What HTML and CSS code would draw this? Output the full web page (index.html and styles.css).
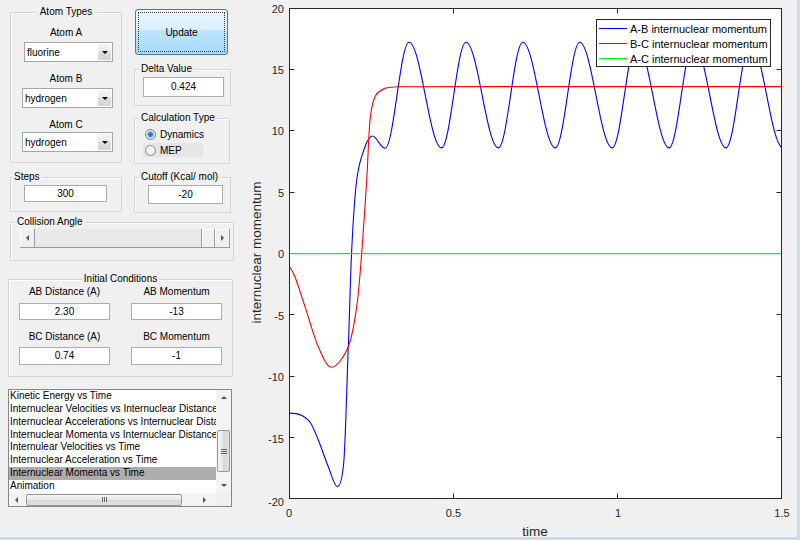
FILE: index.html
```html
<!DOCTYPE html>
<html lang="en">
<head>
<meta charset="utf-8">
<title>Reaction Dynamics</title>
<link rel="stylesheet" href="styles.css">
</head>
<body>
<div class="window">
  <div class="panel">
    <div class="row row-top">
      <div class="group atoms">
        <span class="gtitle center">Atom Types</span>
        <div class="lbl lbl-first">Atom A</div>
        <div class="select sel-a"><span>fluorine</span><span class="drop"></span></div>
        <div class="lbl lbl-next">Atom B</div>
        <div class="select sel-b"><span>hydrogen</span><span class="drop"></span></div>
        <div class="lbl lbl-next">Atom C</div>
        <div class="select sel-c"><span>hydrogen</span><span class="drop"></span></div>
      </div>
      <div class="col-right">
        <button class="update" type="button">Update</button>
        <div class="group delta">
          <span class="gtitle">Delta Value</span>
          <div class="edit delta-edit">0.424</div>
        </div>
        <div class="group calc">
          <span class="gtitle">Calculation Type</span>
          <div class="radio-row first"><span class="radio on"></span><span>Dynamics</span></div>
          <div class="radio-row mep"><span class="radio"></span><span>MEP</span></div>
        </div>
      </div>
    </div>
    <div class="row row-mid">
      <div class="group steps">
        <span class="gtitle tight">Steps</span>
        <div class="edit steps-edit">300</div>
      </div>
      <div class="group cutoff">
        <span class="gtitle">Cutoff (Kcal/ mol)</span>
        <div class="edit cutoff-edit">-20</div>
      </div>
    </div>
    <div class="group angle">
      <span class="gtitle">Collision Angle</span>
      <div class="hscroll">
        <span class="sb-btn"><span class="arr arr-left"></span></span>
        <span class="sb-track"></span>
        <span class="sb-btn sb-thumb"></span>
        <span class="sb-btn"><span class="arr arr-right"></span></span>
      </div>
    </div>
    <div class="group initial">
      <span class="gtitle center">Initial Conditions</span>
      <div class="lbl">AB Distance (A)</div>
      <div class="lbl">AB Momentum</div>
      <div class="edit ic-edit1">2.30</div>
      <div class="edit ic-edit1">-13</div>
      <div class="lbl ic-lbl2">BC Distance (A)</div>
      <div class="lbl ic-lbl2">BC Momentum</div>
      <div class="edit ic-edit2">0.74</div>
      <div class="edit ic-edit2">-1</div>
    </div>
    <div class="listbox">
      <ul class="items">
        <li>Kinetic Energy vs Time</li>
        <li>Internuclear Velocities vs Internuclear Distance</li>
        <li>Internuclear Accelerations vs Internuclear Distance</li>
        <li>Internuclear Momenta vs Internuclear Distance</li>
        <li>Internulear Velocities vs Time</li>
        <li>Internuclear Acceleration vs Time</li>
        <li class="sel">Internuclear Momenta vs Time</li>
        <li>Animation</li>
      </ul>
      <div class="vscroll">
        <span class="vs-btn"><span class="arr arr-up"></span></span>
        <span class="vs-gap1"></span>
        <span class="vs-thumb"><span class="grip-h"></span></span>
        <span class="vs-gap2"></span>
        <span class="vs-btn"><span class="arr arr-down"></span></span>
      </div>
      <div class="lhscroll">
        <span class="lh-btn"><span class="arr arr-left"></span></span>
        <span class="lh-thumb"><span class="grip-v"></span></span>
        <span class="lh-spacer"></span>
        <span class="lh-btn right"><span class="arr arr-right"></span></span>
      </div>
      <div class="corner"></div>
    </div>
  </div>
  <svg class="plot" width="557" height="537" viewBox="0 0 557 537">
    <defs>
      <clipPath id="plotclip"><rect x="49" y="8" width="493" height="491"/></clipPath>
    </defs>
    <rect class="plot-bg" x="49" y="8" width="493" height="491"/>
    <g clip-path="url(#plotclip)">
      <path class="c-blue" d="M49,413.1 C60,413.1 64,416 70,422 C73.05,426.25 75.25,432.55 78.3,440 C81.35,447.45 85.13,458.92 88.3,466.7 C91.47,474.48 94.5,486.7 97.3,486.7 C100.5,486.7 102.3,478 103.8,462 C105.3,446 107,380 108.3,346.7 C109.6,313.4 110.5,274 111.7,250 C112.9,226 114.2,199.5 116.7,180 C119.2,160.5 122.5,153.7 125,146.7 C127.5,139.7 129.8,136 132.3,136 C136.9,136 140.4,148.3 145,148.3 C153.7,148.3 160.3,42.3 169,42.3 C180.81,42.3 189.69,147.9 201.5,147.9 C210.37,147.9 217.03,42.3 225.9,42.3 C237.71,42.3 246.59,147.9 258.4,147.9 C267.27,147.9 273.93,42.3 282.8,42.3 C294.61,42.3 303.49,147.9 315.3,147.9 C324.17,147.9 330.83,42.3 339.7,42.3 C351.51,42.3 360.39,147.9 372.2,147.9 C381.07,147.9 387.73,42.3 396.6,42.3 C408.41,42.3 417.29,147.9 429.1,147.9 C437.97,147.9 444.63,42.3 453.5,42.3 C465.31,42.3 474.19,147.9 486,147.9 C494.87,147.9 501.53,42.3 510.4,42.3 C522.21,42.3 531.09,147.9 542.9,147.9"/>
      <path class="c-red" d="M49,265.8 C50,267.7 52.33,270.18 55,277 C57.67,283.82 61.12,295.08 65,306.7 C68.88,318.32 73.85,336.6 78.3,346.7 C82.75,356.8 86.7,367.3 91.7,367.3 C96.7,367.3 104.13,356.8 108.3,346.7 C112.47,336.6 114.47,322.27 116.7,306.7 C118.93,291.13 120.03,274.42 121.7,253.3 C123.37,232.18 125.32,202.22 126.7,180 C128.08,157.78 128.62,133.88 130,120 C131.38,106.12 132.5,101.98 135,96.7 C137.5,91.42 141.12,89.95 145,88.3 C148.9,87 154,86.7 158.3,86.7 L542,86.6"/>
    </g>
    <rect class="green-fill" x="50" y="253" width="491" height="1.2"/>
    <g class="axis">
      <rect x="49.5" y="8.5" width="492" height="490"/>
      <path d="M49.5,69.5h5M49.5,130.5h5M49.5,192.5h5M49.5,314.5h5M49.5,376.5h5M49.5,437.5h5 M541.5,69.5h-5M541.5,130.5h-5M541.5,192.5h-5M541.5,314.5h-5M541.5,376.5h-5M541.5,437.5h-5 M213.5,498.5v-5M377.5,498.5v-5M213.5,8.5v5M377.5,8.5v5"/>
    </g>
    <g class="tick ylab">
      <text x="44" y="12.5">20</text>
      <text x="44" y="74">15</text>
      <text x="44" y="135">10</text>
      <text x="44" y="196.5">5</text>
      <text x="44" y="258">0</text>
      <text x="44" y="320">-5</text>
      <text x="44" y="381">-10</text>
      <text x="44" y="442.5">-15</text>
      <text x="44" y="505.5">-20</text>
    </g>
    <g class="tick xlab">
      <text x="49" y="516.5">0</text>
      <text x="213.5" y="516.5">0.5</text>
      <text x="378" y="516.5">1</text>
      <text x="542" y="516.5">1.5</text>
    </g>
    <text class="axis-title" transform="translate(20.5,252.5) rotate(-90)">internuclear momentum</text>
    <text class="axis-title" x="295" y="535.5">time</text>
    <g class="legend">
      <rect class="legend-box" x="356.5" y="19.5" width="174" height="47"/>
      <path class="c-blue" d="M359,28.5 H387"/>
      <path class="c-red" d="M359,43.5 H387"/>
      <rect class="green-fill" x="359" y="58" width="28" height="1.2"/>
      <text class="leg-text" x="390" y="32.5">A-B internuclear momentum</text>
      <text class="leg-text" x="390" y="47.5">B-C internuclear momentum</text>
      <text class="leg-text" x="390" y="62.5">A-C internuclear momentum</text>
    </g>
  </svg>
</div>
</body>
</html>
```
FILE: styles.css
```css
* { box-sizing: border-box; }
html, body { margin: 0; padding: 0; }
body {
  width: 800px; height: 540px; overflow: hidden;
  background: #f0f0f0;
  font-family: "Liberation Sans", Arial, sans-serif;
  font-size: 10px; color: #000;
}
.window {
  display: flex; width: 800px; height: 540px;
  border-right: 3px solid #c8dbef; border-bottom: 3px solid #c8dbef;
}
.panel { flex: none; width: 240px; display: flex; flex-direction: column; align-items: flex-start; }
.row { display: flex; align-items: flex-start; }
.row-top { margin-top: 9px; }
.row-mid { margin-top: 13px; }

.group { position: relative; border: 1px solid #d5d5d5; box-shadow: inset 1px 1px 0 #fff; }
.gtitle {
  position: absolute; top: -7px; left: 4px; padding: 0 2px;
  line-height: 12px; background: #f0f0f0; white-space: nowrap;
}
.gtitle.center { left: 50%; transform: translateX(-50%); }
.gtitle.tight { left: 1px; }
.lbl { line-height: 12px; text-align: center; white-space: nowrap; }

/* atom types */
.atoms { margin: 3px 0 0 10px; width: 112px; height: 151px; display: flex; flex-direction: column; }
.lbl-first { margin-top: 14px; }
.lbl-next { margin-top: 11px; }
.select {
  height: 20px; border: 1px solid #a6a6a6; background: #fff;
  display: flex; align-items: center; justify-content: space-between;
  padding: 0 1px 0 2px;
}
.sel-a { margin: 3px 0 0 13px; width: 89px; }
.sel-b { margin: 3px 0 0 11px; width: 91px; }
.sel-c { margin: 1px 0 0 11px; width: 91px; }
.drop {
  width: 13px; height: 16px;
  background: linear-gradient(#f4f4f4, #e8e8e8 50%, #dddddd 50%, #d4d4d4);
  display: flex; align-items: center; justify-content: center;
}
.drop::after {
  content: ""; width: 0; height: 0;
  border-left: 3px solid transparent; border-right: 3px solid transparent; border-top: 3px solid #000;
}

/* right column */
.col-right { margin-left: 12px; display: flex; flex-direction: column; align-items: flex-start; }
.update {
  position: relative; margin-left: 1px; width: 93px; height: 46px; padding: 0;
  font: inherit; color: #000;
  border: 1px solid #3c7fb1; border-radius: 3px;
  background: linear-gradient(#eaf6fd, #d9f0fc 45%, #bee6fd 45%, #a7d9f5);
}
.update::after {
  content: ""; position: absolute; left: 2px; top: 2px; right: 2px; bottom: 2px;
  border: 1px dotted #3a3a3a;
}
.delta { margin-top: 14px; width: 97px; height: 37px; }
.edit { border: 1px solid #abadb3; background: #fff; text-align: center; white-space: nowrap; }
.delta-edit { margin: 7px 0 0 8px; width: 81px; height: 20px; line-height: 18px; }
.calc { margin-top: 12px; width: 96px; height: 46px; }
.radio-row { display: flex; align-items: center; gap: 4px; width: 60px; height: 14px; margin-left: 8px; padding-left: 2px; }
.radio-row.first { margin-top: 8px; }
.radio-row.mep { margin-top: 2px; background: #e6e6e6; }
.radio {
  flex: none; width: 11px; height: 11px; border-radius: 50%;
  border: 1px solid #8f8f8f;
  background: radial-gradient(circle at 50% 40%, #ffffff, #dedede);
}
.radio.on {
  border-color: #5a7fa6;
  background: radial-gradient(circle, #1f62b8 0, #3a8ad9 1.8px, #79b8ec 3px, #f2f6fa 3.6px, #dcdcdc 100%);
}

/* steps / cutoff */
.steps { margin-left: 10px; width: 112px; height: 35px; }
.steps-edit { margin: 7px 0 0 13px; width: 83px; height: 17px; line-height: 15px; }
.cutoff { margin-left: 12px; width: 97px; height: 36px; }
.cutoff-edit { margin: 7px 0 0 13px; width: 75px; height: 19px; line-height: 17px; }

/* collision angle */
.angle { margin: 9px 0 0 10px; width: 224px; height: 39px; }
.hscroll {
  display: flex; margin: 6px 0 0 9px; width: 210px; height: 19px;
  background: #e9e9e9; border-bottom: 1px solid #9a9a9a;
}
.sb-btn {
  flex: none; width: 15px; background: #f0f0f0;
  border-right: 1px solid #9a9a9a; box-shadow: inset 1px 1px 0 #fff;
  display: flex; align-items: center; justify-content: center;
}
.sb-thumb { width: 14px; border-left: 1px solid #9a9a9a; }
.sb-track { flex: 1; }

.arr { width: 0; height: 0; border: 3px solid transparent; }
.arr-left { border-left-width: 0; border-right-color: #555; }
.arr-right { border-right-width: 0; border-left-color: #555; }
.arr-up { border-top-width: 0; border-bottom-color: #555; }
.arr-down { border-bottom-width: 0; border-top-color: #555; }

/* initial conditions */
.initial {
  margin: 18px 0 0 8px; width: 225px; height: 98px;
  display: grid; grid-template-columns: 91px 91px; column-gap: 21px;
  padding: 6px 10px 0; align-content: start;
}
.ic-edit1 { margin-top: 5px; height: 17px; line-height: 15px; }
.ic-lbl2 { margin-top: 11px; }
.ic-edit2 { margin-top: 4px; height: 18px; line-height: 16px; }

/* list box */
.listbox {
  margin: 12px 0 0 8px; width: 224px; height: 118px;
  border: 1px solid #828790; background: #fff;
  display: grid; grid-template-columns: 207px 15px; grid-template-rows: 103px 13px;
}
.items { list-style: none; margin: 0; padding: 0; overflow: hidden; }
.items li { height: 12.85px; line-height: 12.85px; padding-left: 1px; white-space: nowrap; overflow: hidden; }
.items li.sel { background: #adadad; }
.vscroll { display: flex; flex-direction: column; align-items: center; background: #f3f3f3; }
.vs-btn { flex: none; width: 15px; height: 15px; display: flex; align-items: center; justify-content: center; }
.vs-gap1 { flex: none; height: 25px; }
.vs-gap2 { flex: 1; }
.vs-thumb {
  flex: none; width: 13px; height: 42px; border: 1px solid #979797; border-radius: 2px;
  background: linear-gradient(to right, #f4f4f4, #e6e6e6 50%, #d8d8d8 50%, #dedede);
  display: flex; align-items: center; justify-content: center;
}
.grip-h { width: 6px; height: 5px; background: linear-gradient(#666 1px, transparent 1px) 0 0 / 100% 2px; }
.lhscroll { display: flex; align-items: center; background: #f3f3f3; }
.lh-btn { flex: none; width: 15px; height: 13px; display: flex; align-items: center; justify-content: center; }
.lh-btn.right { margin-right: 4px; }
.lh-thumb {
  flex: none; margin-left: 2px; width: 156px; height: 12px;
  border: 1px solid #979797; border-radius: 2px;
  background: linear-gradient(#f4f4f4, #e6e6e6 50%, #d8d8d8 50%, #dedede);
  display: flex; align-items: center; justify-content: center;
}
.grip-v { width: 5px; height: 5px; background: linear-gradient(to right, #666 1px, transparent 1px) 0 0 / 2px 100%; }
.lh-spacer { flex: 1; }
.corner { background: #f0f0f0; }

/* plot */
.plot { flex: none; display: block; }
.plot text { font-family: "Liberation Sans", Arial, sans-serif; }
.plot-bg { fill: #fff; }
.c-blue { stroke: #0000ff; fill: none; stroke-width: 1.1; }
.c-red { stroke: #ff0000; fill: none; stroke-width: 1.1; }
.green-fill { fill: #00ff00; stroke: none; }
.axis rect, .axis path { fill: none; stroke: #262626; stroke-width: 1; }
.tick { font-size: 11px; fill: #262626; }
.ylab { text-anchor: end; }
.xlab { text-anchor: middle; }
.axis-title { font-size: 13.5px; fill: #262626; text-anchor: middle; }
.legend-box { fill: #fff; stroke: #262626; stroke-width: 1; }
.leg-text { font-size: 11px; fill: #000; }
```
